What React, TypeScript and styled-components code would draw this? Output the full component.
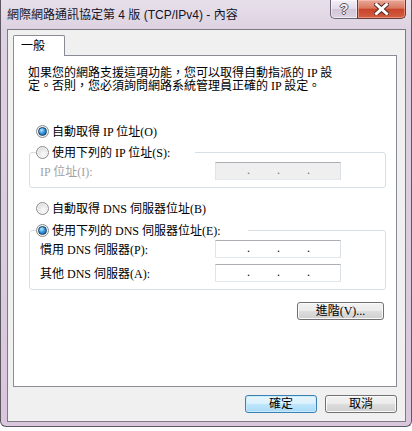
import React from "react";
import styled, { createGlobalStyle, css } from "styled-components";

const GlobalStyle = createGlobalStyle`
  html, body { margin: 0; padding: 0; background: #ffffff; }
  body {
    font-family: "Liberation Serif", "Noto Sans CJK TC", serif;
    font-size: 12px;
    color: #000;
  }
  * { box-sizing: border-box; }
`;

const Window = styled.div`
  width: 412px;
  height: 427px;
  display: flex;
  flex-direction: column;
  background: linear-gradient(180deg, #e7e0ea 0px, #ddd2e1 29px, #d9c7dd 100%);
  border: 1px solid #5d5762;
  border-top: none;
  border-radius: 0 0 6px 6px;
`;

const TitleBar = styled.div`
  height: 29px;
  flex: none;
  display: flex;
  align-items: flex-start;
  padding-left: 6px;
`;

const Title = styled.div`
  align-self: center;
  font-family: "Liberation Sans", "Noto Sans CJK TC", sans-serif;
  font-size: 12px;
  line-height: 16px;
  color: #141428;
  white-space: nowrap;
`;

const CaptionButtons = styled.div`
  margin-left: auto;
  margin-right: 5px;
  display: flex;
`;

const HelpButton = styled.div`
  width: 27px;
  height: 19px;
  border: 1px solid #6d6775;
  border-top: none;
  border-right: none;
  border-radius: 0 0 0 5px;
  background: linear-gradient(180deg, #f4f0f6 0%, #e2d9e6 50%, #d2c6d8 52%, #dcd3e1 100%);
  box-shadow: inset 0 0 0 1px rgba(255, 255, 255, 0.55);
  display: flex;
  align-items: center;
  justify-content: center;
  font-family: "Liberation Sans", sans-serif;
  font-weight: bold;
  font-size: 14px;
  color: #f4f2f6;
  text-shadow: 1px 0 0 #5a5660, -1px 0 0 #5a5660, 0 1px 0 #5a5660, 0 -1px 0 #5a5660;
`;

const CloseButton = styled.div`
  width: 49px;
  height: 19px;
  border: 1px solid #6a3a36;
  border-top: none;
  border-radius: 0 0 5px 0;
  background: linear-gradient(180deg, #e9a89a 0%, #d9785f 45%, #c8452c 52%, #d35d40 100%);
  box-shadow: inset 0 0 0 1px rgba(255, 210, 200, 0.45);
  display: flex;
  align-items: center;
  justify-content: center;
`;

const Client = styled.div`
  flex: 1;
  margin: 0 5px 4px 6px;
  background: #f0f0f0;
  border: 1px solid #7f7986;
  display: flex;
  flex-direction: column;
  padding: 5px 8px 8px 5px;
`;

const TabStrip = styled.div`
  display: flex;
  height: 21px;
  flex: none;
`;

const Tab = styled.div`
  position: relative;
  z-index: 1;
  width: 52px;
  height: 21px;
  border: 1px solid #898c95;
  border-bottom: none;
  border-radius: 2px 2px 0 0;
  background: #ffffff;
  padding-left: 7px;
  line-height: 20px;
`;

const Panel = styled.div`
  flex: 1;
  margin-top: -1px;
  border: 1px solid #898c95;
  background: #ffffff;
  display: flex;
  flex-direction: column;
`;

const Intro = styled.p`
  margin: 11px 0 0 14px;
  line-height: 13px;
`;

const RadioLabel = styled.label`
  display: flex;
  align-items: center;
  gap: 3px;
  height: 16px;
  white-space: nowrap;
`;

const StandaloneRadio = styled(RadioLabel)<{ $mt: number }>`
  margin: ${(p) => p.$mt}px 0 0 22px;
`;

const RadioCircle = styled.span<{ $checked?: boolean }>`
  flex: none;
  width: 13px;
  height: 13px;
  border-radius: 50%;
  border: 1px solid #8b8c8d;
  background: radial-gradient(circle at 60% 65%, #fbfbfb 0%, #e9e9e9 45%, #c9c9c9 100%);
  box-shadow: inset 0 0 0 1px #f6f6f6;
  display: flex;
  align-items: center;
  justify-content: center;
  ${(p) =>
    p.$checked &&
    css`
      &::after {
        content: "";
        width: 7px;
        height: 7px;
        border-radius: 50%;
        border: 1px solid #123f6e;
        background: radial-gradient(circle at 35% 30%, #b6ecff 0%, #3b9be0 45%, #0f4f98 100%);
      }
    `}
`;

const Group = styled.fieldset<{ $mt: number }>`
  margin: ${(p) => p.$mt}px 10px 0 15px;
  padding: 2px 0 7px 6px;
  border: 1px solid #d5dfe5;
  border-radius: 3px;
  min-width: 0;
`;

const GroupLegend = styled.legend<{ $w: number }>`
  padding: 0;
  width: ${(p) => p.$w}px;
  height: 16px;
`;

const FieldRow = styled.div`
  display: flex;
  align-items: center;
  height: 18px;
  margin-left: 4px;
  & + & {
    margin-top: 6px;
  }
`;

const FieldLabel = styled.span<{ $disabled?: boolean }>`
  width: 175px;
  flex: none;
  white-space: nowrap;
  color: ${(p) => (p.$disabled ? "#a2a2a2" : "#000000")};
`;

const IpBox = styled.div<{ $disabled?: boolean }>`
  width: 126px;
  height: 18px;
  border: 1px solid;
  border-color: #abadb3 #dbdfe6 #e3e9ef #e2e3ea;
  background: ${(p) => (p.$disabled ? "#efefef" : "#ffffff")};
  display: flex;
  padding-left: 3px;
  line-height: 15px;
  color: ${(p) => (p.$disabled ? "#6d6d6d" : "#000000")};
`;

const Octet = styled.span`
  width: 29px;
  flex: none;
`;

const Dot = styled.span`
  width: 1px;
  flex: none;
  display: flex;
  justify-content: center;
  overflow: visible;
`;

const Button = styled.button<{ $default?: boolean }>`
  height: 18px;
  padding: 0;
  font-family: "Liberation Serif", "Noto Sans CJK TC", serif;
  font-size: 12px;
  line-height: 16px;
  color: #000;
  border-radius: 3px;
  border: 1px solid #707070;
  background: linear-gradient(180deg, #f2f2f2 0%, #ebebeb 48%, #dddddd 52%, #cfcfcf 100%);
  box-shadow: inset 0 0 0 1px #fbfbfb;
  ${(p) =>
    p.$default &&
    css`
      border-color: #3c7fb1;
      background: linear-gradient(180deg, #eaf6fd 0%, #d9f0fc 48%, #bee6fd 52%, #a7d9f5 100%);
      box-shadow: inset 0 0 0 1px #c8ecff;
    `}
`;

const AdvancedButton = styled(Button)`
  align-self: flex-end;
  margin: 12px 12px 0 0;
  width: 87px;
`;

const DialogButton = styled(Button)`
  width: 72px;
`;

const Footer = styled.div`
  flex: none;
  display: flex;
  justify-content: flex-end;
  gap: 8px;
  margin-top: 8px;
`;

const CloseGlyph = () => (
  <svg width="15" height="12" viewBox="0 0 15 12">
    <path d="M2.5 1.5 L12.5 10.5 M12.5 1.5 L2.5 10.5" stroke="#5a2a24" strokeWidth="5" strokeLinecap="square" />
    <path d="M2.5 1.5 L12.5 10.5 M12.5 1.5 L2.5 10.5" stroke="#ffffff" strokeWidth="3" strokeLinecap="square" />
  </svg>
);

const IpField = ({ disabled }: { disabled?: boolean }) => (
  <IpBox $disabled={disabled}>
    <Octet />
    <Dot>.</Dot>
    <Octet />
    <Dot>.</Dot>
    <Octet />
    <Dot>.</Dot>
    <Octet />
  </IpBox>
);

export default function App() {
  return (
    <>
      <GlobalStyle />
      <Window>
        <TitleBar>
          <Title>網際網路通訊協定第 4 版 (TCP/IPv4) - 內容</Title>
          <CaptionButtons>
            <HelpButton>?</HelpButton>
            <CloseButton>
              <CloseGlyph />
            </CloseButton>
          </CaptionButtons>
        </TitleBar>
        <Client>
          <TabStrip>
            <Tab>一般</Tab>
          </TabStrip>
          <Panel>
            <Intro>
              如果您的網路支援這項功能，您可以取得自動指派的 IP 設
              <br />
              定。否則，您必須詢問網路系統管理員正確的 IP 設定。
            </Intro>
            <StandaloneRadio $mt={30}>
              <RadioCircle $checked />
              自動取得 IP 位址(O)
            </StandaloneRadio>
            <Group $mt={5}>
              <GroupLegend $w={159}>
                <RadioLabel>
                  <RadioCircle />
                  使用下列的 IP 位址(S):
                </RadioLabel>
              </GroupLegend>
              <FieldRow>
                <FieldLabel $disabled>IP 位址(I):</FieldLabel>
                <IpField disabled />
              </FieldRow>
            </Group>
            <StandaloneRadio $mt={12}>
              <RadioCircle />
              自動取得 DNS 伺服器位址(B)
            </StandaloneRadio>
            <Group $mt={6}>
              <GroupLegend $w={212}>
                <RadioLabel>
                  <RadioCircle $checked />
                  使用下列的 DNS 伺服器位址(E):
                </RadioLabel>
              </GroupLegend>
              <FieldRow>
                <FieldLabel>慣用 DNS 伺服器(P):</FieldLabel>
                <IpField />
              </FieldRow>
              <FieldRow>
                <FieldLabel>其他 DNS 伺服器(A):</FieldLabel>
                <IpField />
              </FieldRow>
            </Group>
            <AdvancedButton>進階(V)...</AdvancedButton>
          </Panel>
          <Footer>
            <DialogButton $default>確定</DialogButton>
            <DialogButton>取消</DialogButton>
          </Footer>
        </Client>
      </Window>
    </>
  );
}
